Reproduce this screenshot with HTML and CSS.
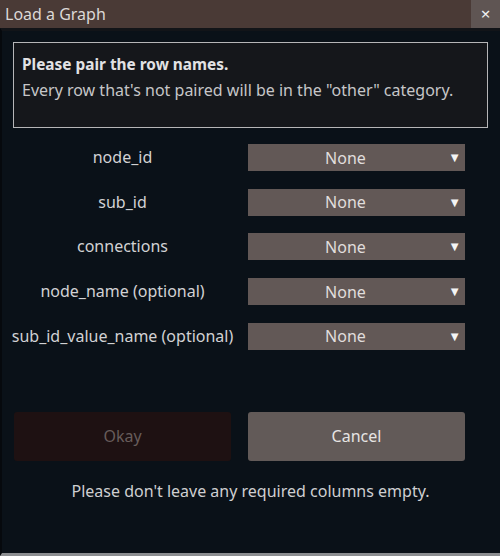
FILE: index.html
```html
<!DOCTYPE html>
<html>
<head>
<meta charset="utf-8">
<link rel="stylesheet" href="styles.css">
</head>
<body>
<div class="window">
  <div class="titlebar">
    <div class="title">Load a Graph</div>
    <div class="close">×</div>
  </div>
  <div class="body">
    <div class="info">
      <div class="info-head">Please pair the row names.</div>
      <div class="info-text">Every row that's not paired will be in the "other" category.</div>
    </div>
    <div class="rows">
      <div class="label">node_id</div>
      <div class="select"><span class="val">None</span><span class="arrow">▼</span></div>
      <div class="label">sub_id</div>
      <div class="select"><span class="val">None</span><span class="arrow">▼</span></div>
      <div class="label">connections</div>
      <div class="select"><span class="val">None</span><span class="arrow">▼</span></div>
      <div class="label">node_name (optional)</div>
      <div class="select"><span class="val">None</span><span class="arrow">▼</span></div>
      <div class="label">sub_id_value_name (optional)</div>
      <div class="select"><span class="val">None</span><span class="arrow">▼</span></div>
    </div>
    <div class="buttons">
      <div class="btn btn-okay">Okay</div>
      <div class="btn btn-cancel">Cancel</div>
    </div>
    <div class="footer">Please don't leave any required columns empty.</div>
  </div>
</div>
</body>
</html>
```
FILE: styles.css
```css
html, body {
  margin: 0;
  padding: 0;
  width: 500px;
  height: 556px;
  overflow: hidden;
  background: #0a1118;
  font-family: "Noto Sans", "Open Sans", sans-serif;
}
.window {
  width: 500px;
  height: 556px;
  display: flex;
  flex-direction: column;
}
.titlebar {
  height: 28px;
  display: flex;
  background: #4a3a36;
  flex: none;
}
.title {
  flex: 1;
  color: #dcd8d6;
  font-size: 16px;
  line-height: 28px;
  padding-left: 5px;
}
.close {
  width: 29px;
  margin-left: 1px;
  background: #5f5553;
  color: #f0f0f0;
  font-size: 17px;
  line-height: 28px;
  text-align: center;
}
.body {
  flex: 1;
  border-top: 3px solid #121418;
  border-left: 2px solid #06090d;
  border-bottom: 3px solid #8c8e91;
  background: #0a1118;
  padding: 11px 12px 0 11px;
  display: flex;
  flex-direction: column;
}
.info {
  border: 1px solid #b6b6b8;
  background: #15171b;
  padding: 11px 0 0 8px;
  box-sizing: border-box;
  height: 86px;
  color: #c9c9cb;
}
.info-head {
  font-weight: bold;
  font-size: 15.4px;
  line-height: 22px;
  color: #e2e2e4;
}
.info-text {
  font-size: 16px;
  line-height: 28px;
  color: #c6c6c8;
}
.rows {
  margin-top: 16px;
  padding: 0 23px 0 1px;
  display: grid;
  grid-template-columns: 217px 217px;
  column-gap: 17px;
  row-gap: 17.7px;
  align-items: center;
}
.label {
  text-align: center;
  color: #d2d2d4;
  font-size: 16px;
  line-height: 27px;
  white-space: nowrap;
  display: flex;
  justify-content: center;
}
.select {
  height: 27px;
  background: #625856;
  position: relative;
  display: flex;
  justify-content: center;
  align-items: center;
  color: #e0dedd;
  font-size: 16px;
}
.val {
  margin-left: -22px;
}
.arrow {
  position: absolute;
  right: 4px;
  top: 0;
  line-height: 27px;
  font-size: 13px;
  color: #f4f4f4;
}
.buttons {
  margin-top: 62px;
  padding: 0 23px 0 1px;
  display: grid;
  grid-template-columns: 217px 217px;
  column-gap: 17px;
}
.btn {
  height: 49px;
  border-radius: 3px;
  display: flex;
  align-items: center;
  justify-content: center;
  font-size: 16px;
}
.btn-okay {
  background: #1e1112;
  color: #675c5a;
}
.btn-cancel {
  background: #625a58;
  color: #e6e4e3;
}
.footer {
  margin-top: 18px;
  text-align: center;
  color: #cfcfd1;
  font-size: 16px;
  line-height: 24px;
}
```
